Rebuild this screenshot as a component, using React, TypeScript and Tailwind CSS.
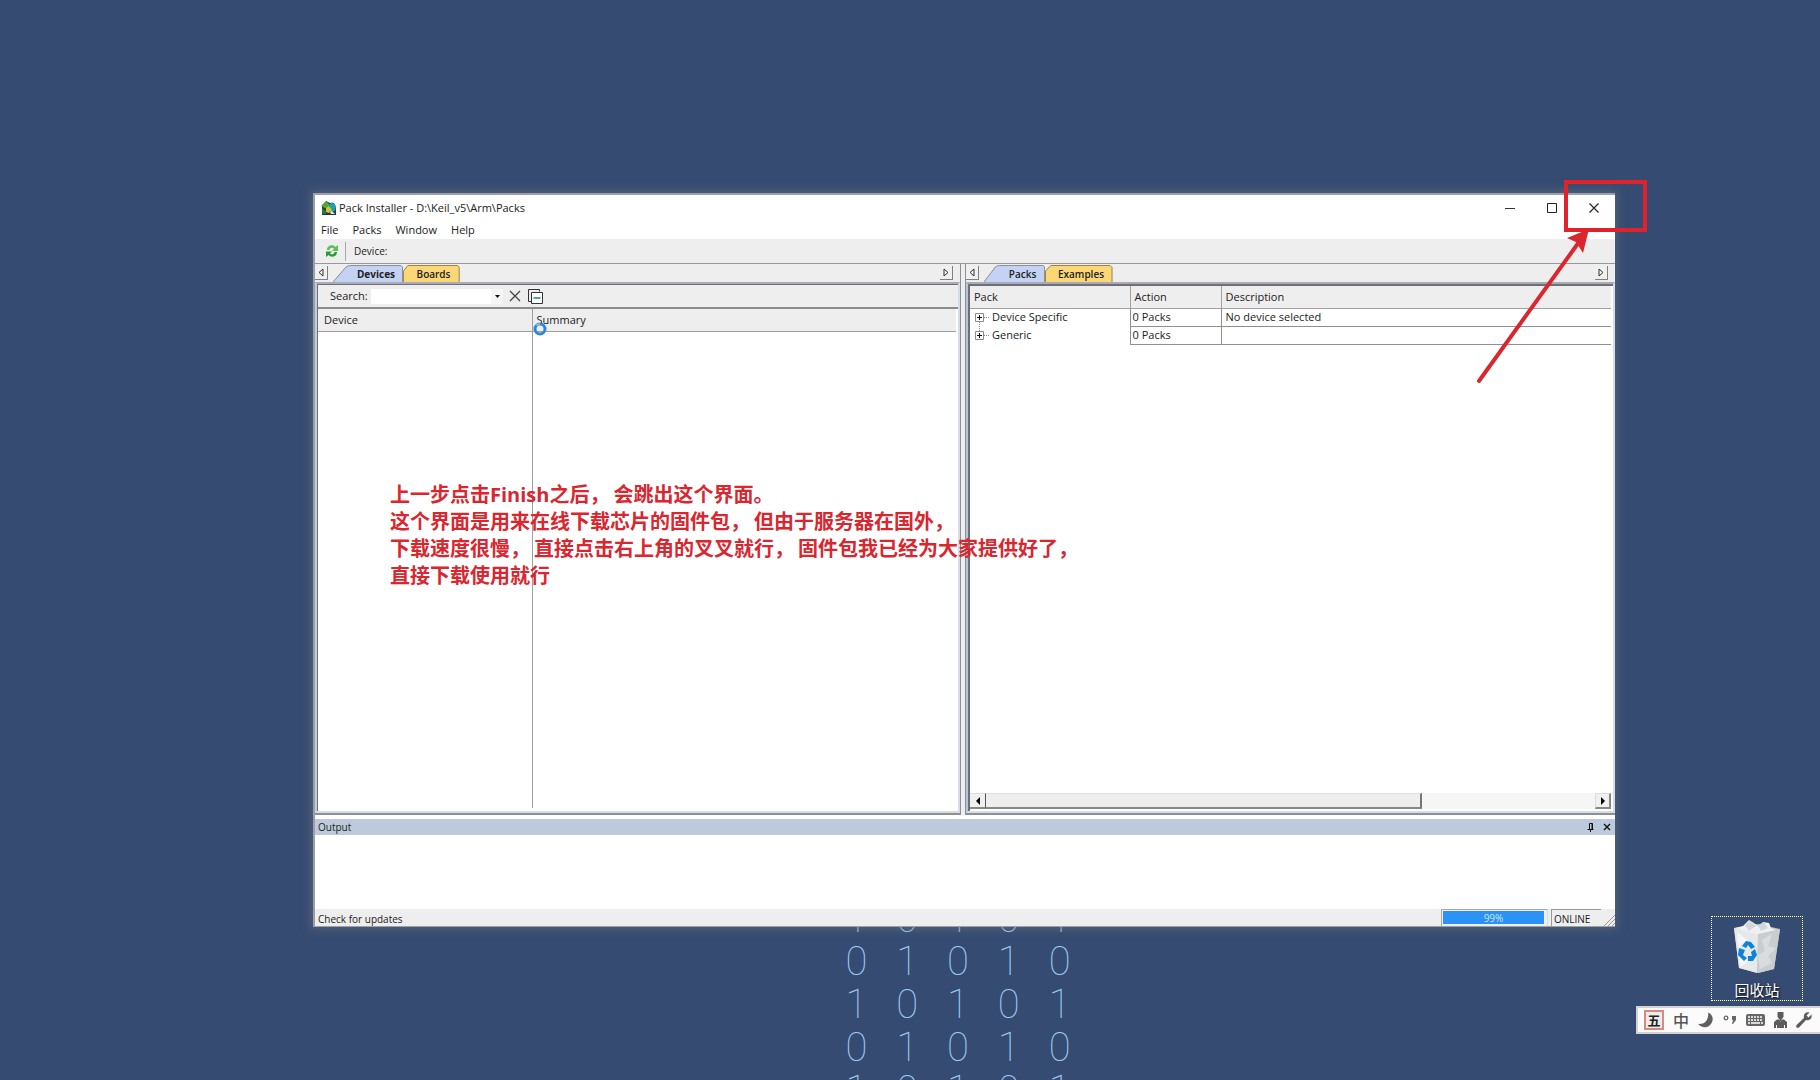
import React from "react";

const UI_FONT = "font-['Open_Sans','Noto_Sans',sans-serif]";

function AppIcon() {
  return (
    <svg width="16" height="16" viewBox="0 0 16 16" aria-hidden="true">
      <path d="M1 6l4-5 4 2 4 0 2 5v7H1z" fill="#26383a" />
      <path d="M0 6l5-5 4 4-3 4z" fill="#4fa83a" />
      <path d="M8 5l3-3 4 4-1 5-4 1z" fill="#1ba3b4" />
      <path d="M5 8l3-2 3 4-3 3-3-1z" fill="#d8c32e" />
      <path d="M1 8l4 3v3H1z" fill="#1d7f3a" />
      <path d="M9 12l2-1 3 3h-4z" fill="#e6e6e2" />
    </svg>
  );
}

function RefreshIcon() {
  return (
    <svg width="14" height="14" viewBox="0 0 14 14" aria-hidden="true">
      <path d="M2 6C2 1 8 0 10.500 3L13 1v6H7l2-2C7.500 3 5 3.500 4.500 6z" fill="#5cbf57" />
      <path d="M12 8c0 5-6 6-8.500 3L1 13V7.500h6l-2 2c1.500 1.500 4 1 4.500-1.500z" fill="#2c9a36" />
    </svg>
  );
}

function ScrollTabButton({ dir }: { dir: "left" | "right" }) {
  return (
    <button
      aria-label={dir === "left" ? "Scroll tabs left" : "Scroll tabs right"}
      className="flex h-[14px] w-[13px] items-center justify-center border-r border-b border-[#808080] bg-[#f0f0f0]"
    >
      <svg width="6" height="9" viewBox="0 0 6 9" fill="none" stroke="#333" aria-hidden="true">
        {dir === "left" ? <path d="M5 1v7L1 4.500z" /> : <path d="M1 1v7l4-3.500z" />}
      </svg>
    </button>
  );
}

function Tab({ label, active, className }: { label: string; active?: boolean; className: string }) {
  return (
    <button role="tab" aria-selected={!!active} className={`relative h-[17px] text-[10px] leading-4 ${className}`}>
      <svg className="absolute inset-0 h-full w-full" viewBox="0 0 70 17" preserveAspectRatio="none" aria-hidden="true">
        {active ? (
          <path d="M0 17L13 2Q15 .5 18 .5H68L69.500 2V17" fill="#c4d3f3" stroke="#8a8f99" vectorEffect="non-scaling-stroke" />
        ) : (
          <path d="M.5 17V6L6 .5H67L69 2.500V17" fill="#fbd775" stroke="#97834e" vectorEffect="non-scaling-stroke" />
        )}
      </svg>
      <span className="relative">{label}</span>
    </button>
  );
}

function TabStrip({ children }: { children: React.ReactNode }) {
  return (
    <div className="flex h-[18px] items-end justify-between bg-[#eeeeef] pr-[7px]">
      <div className="flex items-end" role="tablist">
        {children}
      </div>
      <div className="pb-0.5">
        <ScrollTabButton dir="right" />
      </div>
    </div>
  );
}

function DevicesPane() {
  return (
    <section className="flex min-w-0 flex-col border-r border-b-2 border-[#8e9096]">
      <TabStrip>
        <div className="pb-0.5"><ScrollTabButton dir="left" /></div>
        <Tab label="Devices" active className="ml-[5px] w-[70px] pl-4 font-bold" />
        <Tab label="Boards" className="w-[57px] pl-1 font-semibold" />
      </TabStrip>
      <div className="flex flex-1 flex-col border-t-2 border-r-2 border-b-2 border-l-2 border-t-[#a9abb8] border-r-[#d5dcea] border-b-[#d5dcea] border-l-[#c3cbdb]">
        <div className="flex flex-1 flex-col border-t border-l border-[#6e7076]">
          <div className="flex h-[22px] items-center bg-[#eeeeee] pl-3">
            <label htmlFor="search" className="w-[41px] text-[11px] leading-4">Search:</label>
            <input id="search" className="h-[15px] w-[120px] bg-white px-1 text-[11px] outline-none" />
            <button aria-label="Search history" className="flex h-[15px] w-3 items-center justify-center bg-[#f6f6f6]">
              <svg width="5" height="3" viewBox="0 0 5 3" aria-hidden="true"><path d="M0 0h5L2.500 3z" fill="#111" /></svg>
            </button>
            <button aria-label="Clear search" className="ml-[6px]">
              <svg width="12" height="12" viewBox="0 0 12 12" stroke="#444" strokeWidth="1.300" aria-hidden="true"><path d="M1 1l10 10M11 1L1 11" /></svg>
            </button>
            <button aria-label="Collapse all" className="ml-[7px]">
              <svg width="15" height="15" viewBox="0 0 15 15" fill="none" stroke="#333" aria-hidden="true">
                <path d="M3.500 12.500h-3V.5h11v2" />
                <path d="M3.500 3.500h11v11h-11z" fill="#fff" />
                <path d="M5.500 9h7" stroke="#1b7f8c" strokeWidth="1.500" />
              </svg>
            </button>
          </div>
          <div className="flex flex-1 flex-col border-t-2 border-[#8c8c8c] bg-white pr-0.5 pb-[3px]">
            <table className="h-full w-full flex-1 table-fixed border-collapse text-left text-[11px] leading-4">
              <thead>
                <tr className="h-[22px] bg-[#eeeeee]">
                  <th scope="col" className="w-[214px] border-r border-b border-[#a0a0a0] px-1.5 font-normal">Device</th>
                  <th scope="col" className="border-b border-[#a0a0a0] px-1 font-normal">Summary</th>
                </tr>
              </thead>
              <tbody>
                <tr>
                  <td className="border-r border-[#a0a0a0]" />
                  <td />
                </tr>
              </tbody>
            </table>
          </div>
        </div>
      </div>
    </section>
  );
}

const packRows = [
  { name: "Device Specific", action: "0 Packs", description: "No device selected", last: false },
  { name: "Generic", action: "0 Packs", description: "", last: true },
];

function ExpandToggle({ last }: { last: boolean }) {
  return (
    <svg width="18" height="18" viewBox="0 0 18 18" fill="none" aria-hidden="true">
      <path d={last ? "M5.500 0v5M10 9.500h6" : "M5.500 14v4M10 9.500h6"} stroke="#888" strokeDasharray="1 1" />
      <path d="M1.500 5.500h8v8h-8z" fill="#fff" stroke="#8a8a8a" />
      <path d="M3 9.500h5M5.500 7v5" stroke="#111" />
    </svg>
  );
}

function PacksPane() {
  return (
    <section className="flex min-w-0 flex-col border-b-2 border-l border-[#8e9096]">
      <TabStrip>
        <div className="pb-0.5"><ScrollTabButton dir="left" /></div>
        <Tab label="Packs" active className="ml-[5px] w-[61px] pl-4 font-semibold" />
        <Tab label="Examples" className="w-[68px] pl-1 font-semibold" />
      </TabStrip>
      <div className="flex flex-1 flex-col border-t-2 border-r-2 border-b-2 border-l-2 border-t-[#a9abb8] border-r-[#d5dcea] border-b-[#d5dcea] border-l-[#b9c5da]">
        <div className="flex flex-1 flex-col justify-between border-t-2 border-l-2 border-[#6e7076] bg-white pr-0.5 pb-0.5">
          <table className="w-full table-fixed border-collapse text-left text-[11px] leading-4">
            <thead>
              <tr className="h-[22px] bg-[#eeeeee]">
                <th scope="col" className="w-[160px] border-r border-b border-[#a0a0a0] px-1 font-normal">Pack</th>
                <th scope="col" className="w-[91px] border-r border-b border-[#a0a0a0] px-1 font-normal">Action</th>
                <th scope="col" className="border-b border-[#a0a0a0] px-1 font-normal">Description</th>
              </tr>
            </thead>
            <tbody>
              {packRows.map((row) => (
                <tr key={row.name} className="h-[18px]">
                  <td className="border-r border-[#8f8f8f] p-0">
                    <div className="flex h-[17px] items-center pl-1">
                      <button aria-label={`Expand ${row.name}`}><ExpandToggle last={row.last} /></button>
                      <span>{row.name}</span>
                    </div>
                  </td>
                  <td className="border-r border-b border-[#8f8f8f] px-0.5 py-0">{row.action}</td>
                  <td className="border-b border-[#8f8f8f] px-1 py-0">{row.description}</td>
                </tr>
              ))}
            </tbody>
          </table>
          <div className="flex h-4 bg-[#f6f6f4]">
            <button aria-label="Scroll left" className="flex w-4 items-center justify-center border-t border-r border-b-2 border-t-[#ddd] border-r-[#555] border-b-[#888] bg-[#f0f0f0]">
              <svg width="4" height="8" viewBox="0 0 4 8" aria-hidden="true"><path d="M4 0v8L0 4z" /></svg>
            </button>
            <div className="w-[68%] border-t border-r-2 border-b-2 border-t-[#ddd] border-r-[#777] border-b-[#888] bg-[#eeeeec]" />
            <div className="flex-1" />
            <button aria-label="Scroll right" className="flex w-4 items-center justify-center border-t border-r-2 border-b-2 border-l border-t-[#ddd] border-r-[#888] border-b-[#888] border-l-[#ddd] bg-[#f0f0f0]">
              <svg width="4" height="8" viewBox="0 0 4 8" aria-hidden="true"><path d="M0 0v8l4-4z" /></svg>
            </button>
          </div>
        </div>
      </div>
    </section>
  );
}

function TitleBar() {
  return (
    <header className="flex h-[25px] items-center justify-between pr-4 pl-[6px]">
      <h1 className="flex items-center gap-0.5 text-[11px] leading-4">
        <AppIcon />
        Pack Installer - D:\Keil_v5\Arm\Packs
      </h1>
      <div className="flex items-center gap-8">
        <button aria-label="Minimize">
          <svg width="10" height="10" viewBox="0 0 10 10" stroke="#333" aria-hidden="true"><path d="M0 5.500h10" /></svg>
        </button>
        <button aria-label="Maximize">
          <svg width="10" height="10" viewBox="0 0 10 10" fill="none" stroke="#222" aria-hidden="true"><path d="M.5 .5h9v9h-9z" /></svg>
        </button>
        <button aria-label="Close">
          <svg width="10" height="10" viewBox="0 0 10 10" stroke="#222" strokeWidth="1.200" aria-hidden="true"><path d="M.5 .5l9 9M9.500 .5l-9 9" /></svg>
        </button>
      </div>
    </header>
  );
}

function StatusBar() {
  return (
    <footer className="flex h-[17px] items-stretch justify-between bg-[#eeeeee] pl-[3px] text-[10px] leading-4">
      <span className="pt-0.5">Check for updates</span>
      <div className="flex">
        <div className="mr-[3px] w-[107px] border-t border-r border-l border-t-[#aaa] border-r-[#ddd] border-l-[#aaa] pt-px pr-[3px] pl-px">
          <div role="progressbar" aria-valuenow={99} aria-label="Update progress" className="h-[13px] bg-[#2a93f5] text-center leading-[14px] text-[#cfe3f7]">99%</div>
        </div>
        <span className="w-[50px] border-t border-l border-[#999] pt-px pl-0.5">ONLINE</span>
        <svg className="mt-1 ml-px" width="13" height="13" viewBox="0 0 13 13" stroke="#999" aria-hidden="true"><path d="M2 13L13 2M6 13l7-7M10 13l3-3" /></svg>
      </div>
    </footer>
  );
}

function InstallerWindow() {
  return (
    <main className={`absolute top-[193px] right-[205px] bottom-[153px] left-[313px] flex flex-col border-t-2 border-b border-l-2 border-[#9a9fa9] bg-white text-[#222] shadow-[0_0_9px_2px_rgba(115,120,125,0.55)] ${UI_FONT}`}>
      <TitleBar />
      <nav className="flex h-[19px] items-center gap-[14px] pl-[6px] text-[11px] leading-4">
        {["File", "Packs", "Window", "Help"].map((item) => (
          <button key={item}>{item}</button>
        ))}
      </nav>
      <div className="flex h-[25px] items-center border-b border-[#999] bg-[#eeeeee] pl-[10px] text-[10px] leading-4">
        <button aria-label="Check for updates"><RefreshIcon /></button>
        <div className="mr-2 ml-[6px] h-[19px] w-px bg-[#aaa]" />
        <span>Device:</span>
      </div>
      <div className="grid flex-1 grid-cols-[646fr_650fr] gap-1 bg-[#eeeef0]">
        <DevicesPane />
        <PacksPane />
      </div>
      <section className="mt-1 flex h-[90px] flex-col">
        <div className="flex h-[16px] items-center justify-between bg-[#bccadb] pr-1 pl-[3px]">
          <h2 className="text-[10px] leading-4">Output</h2>
          <div className="flex items-center gap-2">
            <button aria-label="Auto hide">
              <svg width="8" height="9" viewBox="0 0 8 9" fill="none" stroke="#111" aria-hidden="true"><path d="M2.500 6V.5h3V6M5 .5V6M.5 6.500h6M3.500 6.500V9" /></svg>
            </button>
            <button aria-label="Close output">
              <svg width="8" height="8" viewBox="0 0 8 8" stroke="#111" strokeWidth="1.400" aria-hidden="true"><path d="M1 1l6 6M7 1L1 7" /></svg>
            </button>
          </div>
        </div>
      </section>
      <StatusBar />
      <svg className="absolute top-[127px] left-[218px]" width="14" height="14" viewBox="0 0 14 14" fill="none" aria-hidden="true">
        <circle cx="7" cy="7" r="5" stroke="#2b86d9" strokeWidth="3" />
        <path d="M3.500 3.500A5 5 0 0 1 7 2" stroke="#7cc0f2" strokeWidth="2" />
      </svg>
      <Annotations />
    </main>
  );
}

const noteLines = [
  ["上一步点击Finish之后，", "会跳出这个界面。"],
  ["这个界面是用来在线下载芯片的固件包，", "但由于服务器在国外，"],
  ["下载速度很慢，", "直接点击右上角的叉叉就行，", "固件包我已经为大家提供好了，"],
  ["直接下载使用就行"],
];

function Annotations() {
  return (
    <>
      <div className="absolute top-[286px] left-[75px] font-['Open_Sans','Noto_Sans_CJK_SC',sans-serif] text-[20px] leading-[27px] font-bold whitespace-nowrap text-[#d9262f]">
        {noteLines.map((parts) => (
          <p key={parts[0]} className="flex gap-1">
            {parts.map((part) => (
              <span key={part}>{part}</span>
            ))}
          </p>
        ))}
      </div>
      <div className="absolute top-[-15px] right-[-32px] h-[52px] w-[83px] border-4 border-[#e0222b]" />
      <svg className="absolute top-[33px] right-[21px]" width="120" height="158" viewBox="0 0 120 158" aria-hidden="true">
        <path d="M5 153L105 14" stroke="#d9262f" strokeWidth="4" strokeLinecap="round" />
        <path d="M115 1L93 10l9 4 7 11z" fill="#d9262f" />
      </svg>
    </>
  );
}

function BinaryPattern() {
  const digits = Array.from({ length: 25 }, (_, i) => ((Math.floor(i / 5) + (i % 5)) % 2 === 0 ? "1" : "0"));
  return (
    <div aria-hidden="true" className="absolute top-[897px] left-[831px] grid w-[254px] grid-cols-5 text-center font-['Roboto',sans-serif] text-[40px] leading-[43px] font-thin text-[#9ccdf5]">
      {digits.map((d, i) => (
        <span key={i}>{d}</span>
      ))}
    </div>
  );
}

function RecycleBin() {
  return (
    <button className="absolute right-[17px] bottom-[79px] flex h-[85px] w-[92px] flex-col items-center border border-dotted border-white pt-[3px]">
      <svg width="48" height="54" viewBox="0 0 48 54" aria-hidden="true">
        <path d="M1 8L24 4l23 5-6 40-16 4L6 48z" fill="#c3c7cb" />
        <path d="M2 8l8-2 6-6 5 3 5 4 4-5 6 1 2 5 7 3-20 5z" fill="#eef0f1" />
        <path d="M12 5l5-4 6 5-7 5zM25 5l6-3 4 6-7 3z" fill="#d3d7da" />
        <path d="M1 8l24 6-1 39L6 48z" fill="#e6e8ea" />
        <path d="M25 14L47 9l-6 40-16 4z" fill="#c9cdd0" />
        <path d="M29 20l10-6-4 12 8 2-8 8 4 7-12 6-2-14 7-4z" fill="#dadddf" />
        <path d="M4 12l10 8-7 6 8 16-8 5z" fill="#f5f6f7" />
        <g fill="#0f83d8">
          <path d="M9 26l4-5 5 1 4 5-4 2-3-4-2 3z" />
          <path d="M6 28l6 2-2 5 4 3-3 3-6-6z" />
          <path d="M22 29l2 6-4 6h-5v-5h4l-1-4z" />
        </g>
      </svg>
      <span className="mt-1.5 font-['Noto_Sans_CJK_SC',sans-serif] text-[15px] leading-5 text-white [text-shadow:1px_1px_2px_#000]">回收站</span>
    </button>
  );
}

function ImeBar() {
  return (
    <div className="absolute right-0 bottom-[46px] flex h-7 w-[184px] items-center justify-between border-2 border-r-0 border-[#d2d2d2] bg-[#fbfbfb] pr-2 pl-1.5 font-['Noto_Sans_CJK_SC',sans-serif] text-[#555]">
      <button aria-label="Input mode" className="flex h-5 w-5 items-center justify-center border-2 border-[#d98a80] bg-[#eeeceb] text-[13px] leading-4 font-bold text-[#222]">五</button>
      <button className="text-[16px] leading-5 font-medium">中</button>
      <button aria-label="Half width">
        <svg width="16" height="16" viewBox="0 0 17 16" aria-hidden="true"><path d="M11 0c6 3 6 10 1 14-4 3-9 2-12-2 6 1 11-2 11-12z" fill="#606060" /></svg>
      </button>
      <button aria-label="Punctuation">
        <svg width="14" height="10" viewBox="0 0 14 10" aria-hidden="true">
          <circle cx="3" cy="3" r="1.800" fill="none" stroke="#666" strokeWidth="1.300" />
          <path d="M9 1h4v4l-3 4H9l1-4H9z" fill="#666" />
        </svg>
      </button>
      <button aria-label="Soft keyboard">
        <svg width="19" height="12" viewBox="0 0 19 12" aria-hidden="true">
          <rect width="19" height="12" rx="2" fill="#666" />
          <path d="M2 3h15M2 6h15" stroke="#fff" strokeWidth="1.500" strokeDasharray="2 1" />
          <path d="M2 9h2M5 9h9M15 9h2" stroke="#fff" strokeWidth="1.500" />
        </svg>
      </button>
      <button aria-label="User">
        <svg width="13" height="16" viewBox="0 0 13 16" fill="#5c5c5c" aria-hidden="true">
          <path d="M3.500 0h6v5l-2 2.500v2h-2v-2l-2-2.500z" />
          <path d="M0 16v-6l3-2.500h2L6.500 10 8 7.500h2l3 2.500v6h-2v-3h-1v3H3v-3H2v3z" />
        </svg>
      </button>
      <button aria-label="Tools">
        <svg width="16" height="16" viewBox="0 0 16 16" aria-hidden="true"><path d="M13.500 .5L10.500 3.500l2 2 3-3c1 4-2 6.500-5.500 5.500L3 15.500c-2 1-3.500-.5-2.500-2.500L8 6C7 2.500 9.500-.5 13.500 .5z" fill="#5c5c5c" /></svg>
      </button>
    </div>
  );
}

export default function App() {
  return (
    <div className="relative h-screen overflow-hidden bg-[#364b72]">
      <BinaryPattern />
      <InstallerWindow />
      <RecycleBin />
      <ImeBar />
    </div>
  );
}
